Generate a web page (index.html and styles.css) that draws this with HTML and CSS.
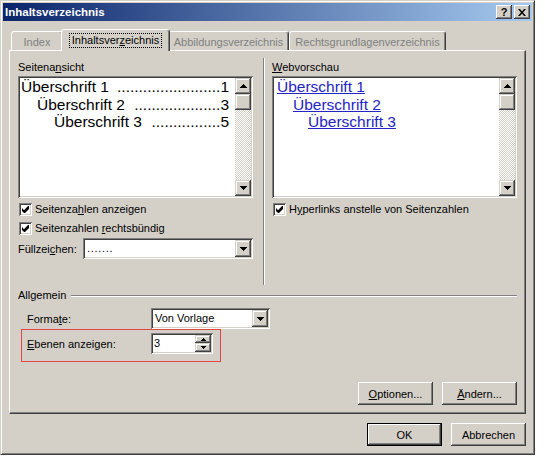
FILE: index.html
```html
<!DOCTYPE html>
<html lang="de">
<head>
  <meta charset="UTF-8" />
  <title>Inhaltsverzeichnis</title>
  <link rel="stylesheet" href="styles.css">
</head>
<body>

  <div class="window">

    <!-- Title bar -->
    <div class="titlebar">
      <span class="title">Inhaltsverzeichnis</span>
      <span class="cap-btn help">?</span>
      <span class="cap-btn">
        <svg width="8" height="7" viewBox="0 0 8 7"><path d="M0 0h2l2 2.4 2-2.4h2L5 3.5 8 7H6L4 4.6 2 7H0l3-3.5z"/></svg>
      </span>
    </div>

    <div class="dialog-body">

      <!-- Tabs -->
      <div class="tabs">
        <div class="tab off t-index">Index</div>
        <div class="tab on"><span class="focus">Inhaltsver<u>z</u>eichnis</span></div>
        <div class="tab off t-abb">Abbildungsverzeichnis</div>
        <div class="tab off t-rgv">Rechtsgrundlagenverzeichnis</div>
      </div>

      <div class="panel">

        <div class="columns">
          <!-- Print preview -->
          <div class="col col-left">
            <div class="label">Seitena<u>n</u>sicht</div>
            <div class="preview">
              <div class="preview-text">
                <div class="toc"><span class="toc-title">Überschrift 1</span><span class="leader">........................</span><span>1</span></div>
                <div class="toc lvl2"><span class="toc-title">Überschrift 2</span><span class="leader">....................</span><span>3</span></div>
                <div class="toc lvl3"><span class="toc-title">Überschrift 3</span><span class="leader">................</span><span>5</span></div>
              </div>
              <div class="vscroll">
                <span class="sb-btn"><svg width="7" height="4" viewBox="0 0 7 4"><path d="M3 0h1v1h1v1h1v1h1v1H0V3h1V2h1V1h1z"/></svg></span>
                <span class="sb-btn"></span>
                <span class="sb-track"></span>
                <span class="sb-btn"><svg width="7" height="4" viewBox="0 0 7 4"><path d="M0 0h7v1H6v1H5v1H4v1H3V3H2V2H1V1H0z"/></svg></span>
              </div>
            </div>
            <div class="check c1">
              <span class="cb"><svg width="7" height="7" viewBox="0 0 7 7"><path d="M6 0h1v3L3 7H2L0 5V2l2 2.2z"/></svg></span>
              <span>Seitenza<u>h</u>len anzeigen</span>
            </div>
            <div class="check c2">
              <span class="cb"><svg width="7" height="7" viewBox="0 0 7 7"><path d="M6 0h1v3L3 7H2L0 5V2l2 2.2z"/></svg></span>
              <span>Seitenzahlen <u>r</u>echtsbündig</span>
            </div>
            <div class="fill-row">
              <span class="fill-label">Füllzei<u>c</u>hen:</span>
              <div class="combo fill-combo">
                <span class="combo-text dots">.......</span>
                <span class="drop"><svg width="7" height="4" viewBox="0 0 7 4"><path d="M0 0h7v1H6v1H5v1H4v1H3V3H2V2H1V1H0z"/></svg></span>
              </div>
            </div>
          </div>

          <div class="vsep"></div>

          <!-- Web preview -->
          <div class="col col-right">
            <div class="label"><u>W</u>ebvorschau</div>
            <div class="preview web">
              <div class="preview-text">
                <div class="link-line"><a>Überschrift 1</a></div>
                <div class="link-line lvl2w"><a>Überschrift 2</a></div>
                <div class="link-line lvl3w"><a>Überschrift 3</a></div>
              </div>
              <div class="vscroll">
                <span class="sb-btn"><svg width="7" height="4" viewBox="0 0 7 4"><path d="M3 0h1v1h1v1h1v1h1v1H0V3h1V2h1V1h1z"/></svg></span>
                <span class="sb-btn"></span>
                <span class="sb-track"></span>
                <span class="sb-btn"><svg width="7" height="4" viewBox="0 0 7 4"><path d="M0 0h7v1H6v1H5v1H4v1H3V3H2V2H1V1H0z"/></svg></span>
              </div>
            </div>
            <div class="check c1">
              <span class="cb"><svg width="7" height="7" viewBox="0 0 7 7"><path d="M6 0h1v3L3 7H2L0 5V2l2 2.2z"/></svg></span>
              <span>H<u>y</u>perlinks anstelle von Seitenzahlen</span>
            </div>
          </div>
        </div>

        <!-- General -->
        <div class="group-head">
          <span>Allgemein</span>
          <span class="etch"></span>
        </div>

        <div class="form-row">
          <span class="form-label">Forma<u>t</u>e:</span>
          <div class="combo format-combo">
            <span class="combo-text">Von Vorlage</span>
            <span class="drop"><svg width="7" height="4" viewBox="0 0 7 4"><path d="M0 0h7v1H6v1H5v1H4v1H3V3H2V2H1V1H0z"/></svg></span>
          </div>
        </div>

        <div class="highlight">
          <span class="form-label"><u>E</u>benen anzeigen:</span>
          <div class="spin">
            <span class="spin-text">3</span>
            <span class="spin-btns">
              <span class="spin-up"><svg width="5" height="3" viewBox="0 0 5 3"><path d="M2 0h1v1h1v1h1v1H0V2h1V1h1z"/></svg></span>
              <span class="spin-down"><svg width="5" height="3" viewBox="0 0 5 3"><path d="M0 0h5v1H4v1H3v1H2V2H1V1H0z"/></svg></span>
            </span>
          </div>
        </div>

        <div class="panel-buttons">
          <span class="btn"><span><u>O</u>ptionen...</span></span>
          <span class="btn"><span><u>Ä</u>ndern...</span></span>
        </div>

      </div>

      <div class="dialog-buttons">
        <span class="btn default">OK</span>
        <span class="btn">Abbrechen</span>
      </div>

    </div>
  </div>

</body>
</html>
```

FILE: styles.css
```css
* {
  box-sizing: border-box;
}

body {
  margin: 0;
  background: #fff;
  font-family: "Liberation Sans", Arial, sans-serif;
  font-size: 11px;
  color: #000;
}

u {
  text-decoration: underline;
  text-underline-offset: 1px;
}

/* Window frame */
.window {
  width: 535px;
  background: #d4d0c8;
  border: 1px solid;
  border-color: #d4d0c8 #404040 #404040 #d4d0c8;
  box-shadow: inset 1px 1px #fff, inset -1px -1px #808080;
  padding: 2px;
}

.titlebar {
  height: 18px;
  display: flex;
  align-items: flex-start;
  padding: 0 2px;
  background: linear-gradient(to right, #0a246a, #a6caf0);
}

.title {
  flex: 1;
  color: #fff;
  font-weight: bold;
  font-size: 11.5px;
  line-height: 17px;
  padding-top: 1px;
}

.cap-btn {
  width: 16px;
  height: 14px;
  margin-top: 2px;
  display: flex;
  align-items: center;
  justify-content: center;
  background: #d4d0c8;
  box-shadow: inset -1px -1px #404040, inset 1px 1px #fff, inset -2px -2px #808080, inset 2px 2px #d4d0c8;
  font-weight: bold;
  font-size: 11px;
  line-height: 14px;
}

.cap-btn.help {
  margin-right: 2px;
}

.dialog-body {
  padding: 0 6px 6px;
}

/* Tabs */
.tabs {
  display: flex;
  align-items: flex-end;
  height: 21px;
  margin-top: 8px;
  padding-left: 2px;
  position: relative;
  z-index: 1;
}

.tab {
  height: 19px;
  padding-top: 4px;
  line-height: 13px;
  text-align: center;
  white-space: nowrap;
  color: #808080;
  background: #d4d0c8;
  border: 1px solid;
  border-bottom: 0;
  border-color: #fff #404040 transparent #fff;
  border-radius: 3px 3px 0 0;
  box-shadow: inset -1px 0 #808080;
}

.t-index { width: 52px; }
.t-abb { width: 121px; }
.t-rgv { width: 157px; }

.tab.on {
  width: 109px;
  height: 22px;
  margin: 0 -2px -1px;
  padding-top: 3px;
  color: #000;
  position: relative;
  z-index: 2;
}

.focus {
  display: inline-block;
  border: 1px dotted #000;
  padding: 0 2px;
  line-height: 13px;
}

/* Tab page */
.panel {
  border: 1px solid;
  border-color: #fff #404040 #404040 #fff;
  box-shadow: inset -1px -1px #808080;
  padding: 7px 8px 8px;
}

.columns {
  display: flex;
  height: 227px;
}

.col-left {
  width: 235px;
  padding-top: 3px;
}

.col-right {
  width: 245px;
  padding-top: 3px;
}

.vsep {
  width: 2px;
  border-left: 1px solid #808080;
  border-right: 1px solid #fff;
  margin: 0 7px 0 10px;
}

.label {
  height: 13px;
  line-height: 13px;
}

.preview {
  margin-top: 2px;
  height: 122px;
  display: flex;
  padding: 2px;
  background: #fff;
  box-shadow: inset 1px 1px #808080, inset -1px -1px #fff, inset 2px 2px #404040, inset -2px -2px #d4d0c8;
}

.preview-text {
  flex: 1;
  min-width: 0;
  padding: 0 6px 0 1px;
  font-size: 15.5px;
  line-height: 17.5px;
}

.web .preview-text {
  padding-left: 3px;
}

.toc {
  display: flex;
  white-space: nowrap;
}

.toc-title {
  margin-right: 4px;
}

.leader {
  flex: 1;
  text-align: right;
}

.lvl2 { padding-left: 16px; }
.lvl3 { padding-left: 33px; }
.lvl2w { padding-left: 16px; }
.lvl3w { padding-left: 31px; }

.link-line a {
  color: #2424c4;
  text-decoration: underline;
}

/* Scrollbar */
.vscroll {
  width: 16px;
  display: flex;
  flex-direction: column;
  background: repeating-conic-gradient(#fff 0 25%, #d4d0c8 0 50%) 0 0 / 2px 2px;
}

.sb-btn {
  width: 16px;
  height: 16px;
  display: flex;
  align-items: center;
  justify-content: center;
  background: #d4d0c8;
  box-shadow: inset -1px -1px #404040, inset 1px 1px #d4d0c8, inset -2px -2px #808080, inset 2px 2px #fff;
}

.sb-track {
  flex: 1;
}

/* Checkboxes */
.check {
  display: flex;
  align-items: center;
  gap: 3px;
  height: 13px;
  line-height: 13px;
  white-space: nowrap;
}

.c1 { margin-top: 5px; }
.c2 { margin-top: 6px; }

.cb {
  width: 13px;
  height: 13px;
  margin-left: 1px;
  display: flex;
  align-items: center;
  justify-content: center;
  background: #fff;
  box-shadow: inset 1px 1px #808080, inset -1px -1px #fff, inset 2px 2px #404040, inset -2px -2px #d4d0c8;
}

/* Combo boxes */
.combo {
  display: flex;
  height: 21px;
  padding: 2px;
  background: #fff;
  box-shadow: inset 1px 1px #808080, inset -1px -1px #fff, inset 2px 2px #404040, inset -2px -2px #d4d0c8;
}

.combo-text {
  flex: 1;
  padding-left: 2px;
  line-height: 17px;
  white-space: nowrap;
}

.dots {
  letter-spacing: 0.7px;
}

.drop {
  width: 16px;
  height: 17px;
  display: flex;
  align-items: center;
  justify-content: center;
  background: #d4d0c8;
  box-shadow: inset -1px -1px #404040, inset 1px 1px #d4d0c8, inset -2px -2px #808080, inset 2px 2px #fff;
}

.fill-row {
  display: flex;
  align-items: center;
  margin-top: 3px;
}

.fill-label {
  width: 65px;
}

.fill-combo {
  width: 170px;
}

/* General group */
.group-head {
  display: flex;
  align-items: center;
  height: 13px;
  margin-top: 4px;
  line-height: 13px;
}

.etch {
  flex: 1;
  height: 2px;
  margin-left: 5px;
  border-top: 1px solid #808080;
  border-bottom: 1px solid #fff;
}

.form-row {
  display: flex;
  align-items: center;
  height: 21px;
  margin-top: 6px;
  padding-left: 9px;
}

.form-label {
  width: 124px;
}

.format-combo {
  width: 119px;
}

.highlight {
  display: flex;
  align-items: center;
  width: 200px;
  margin-left: 3px;
  padding: 3px 7px 7px 5px;
  border: 1px solid #e04646;
}

.spin {
  width: 62px;
  height: 21px;
  display: flex;
  padding: 2px;
  background: #fff;
  box-shadow: inset 1px 1px #808080, inset -1px -1px #fff, inset 2px 2px #404040, inset -2px -2px #d4d0c8;
}

.spin-text {
  flex: 1;
  padding-left: 1px;
  line-height: 17px;
}

.spin-btns {
  width: 16px;
  display: flex;
  flex-direction: column;
}

.spin-btns span {
  display: flex;
  align-items: center;
  justify-content: center;
  background: #d4d0c8;
  box-shadow: inset -1px -1px #404040, inset 1px 1px #d4d0c8, inset -2px -2px #808080, inset 2px 2px #fff;
}

.spin-up { height: 8px; }
.spin-down { height: 9px; }

/* Push buttons */
.panel-buttons,
.dialog-buttons {
  display: flex;
  justify-content: flex-end;
  gap: 9px;
}

.panel-buttons {
  margin-top: 20px;
}

.dialog-buttons {
  margin-top: 9px;
}

.btn {
  width: 75px;
  height: 23px;
  display: flex;
  align-items: center;
  justify-content: center;
  background: #d4d0c8;
  box-shadow: inset -1px -1px #404040, inset 1px 1px #fff, inset -2px -2px #808080, inset 2px 2px #d4d0c8;
}

.btn.default {
  border: 1px solid #000;
}
```
